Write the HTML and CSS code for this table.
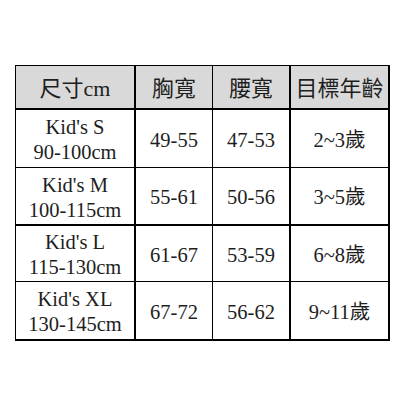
FILE: index.html
```html
<!DOCTYPE html>
<html lang="zh-Hant">
<head>
<meta charset="utf-8">
<link rel="stylesheet" href="styles.css">
</head>
<body>
<table class="size-table">
  <tr class="head">
    <th class="c1">尺寸cm</th>
    <th class="c2">胸寬</th>
    <th class="c3">腰寬</th>
    <th class="c4">目標年齡</th>
  </tr>
  <tr class="r1">
    <td class="c1">Kid's S<br>90-100cm</td>
    <td class="c2">49-55</td>
    <td class="c3">47-53</td>
    <td class="c4">2~3歲</td>
  </tr>
  <tr class="r2">
    <td class="c1">Kid's M<br>100-115cm</td>
    <td class="c2">55-61</td>
    <td class="c3">50-56</td>
    <td class="c4">3~5歲</td>
  </tr>
  <tr class="r3">
    <td class="c1">Kid's L<br>115-130cm</td>
    <td class="c2">61-67</td>
    <td class="c3">53-59</td>
    <td class="c4">6~8歲</td>
  </tr>
  <tr class="r4">
    <td class="c1">Kid's XL<br>130-145cm</td>
    <td class="c2">67-72</td>
    <td class="c3">56-62</td>
    <td class="c4">9~11歲</td>
  </tr>
</table>
</body>
</html>
```
FILE: styles.css
```css
html, body {
  margin: 0;
  padding: 0;
  background: #ffffff;
}

.size-table {
  margin: 65px 0 0 15px;
  border-collapse: separate;
  border-spacing: 0;
  border-top: 1px solid #000;
  border-left: 1px solid #000;
  table-layout: fixed;
  font-family: "Liberation Serif", "Noto Sans CJK TC", serif;
  color: #1e1e1e;
}

.size-table th,
.size-table td {
  padding: 3px 0 0 0;
  text-align: center;
  vertical-align: middle;
  border-bottom: 2px solid #000;
  box-sizing: border-box;
}

.size-table th {
  background: #d9d9d9;
  font-weight: normal;
  font-size: 22px;
  line-height: 26px;
  height: 44px;
}

.size-table td {
  font-size: 20.5px;
  line-height: 25px;
}

.c1 { width: 120px; border-right: 2px solid #000; }
.c2 { width: 77px; border-right: 1px solid #000; }
.c3 { width: 78px; border-right: 2px solid #000; }
.c4 { width: 99px; border-right: 2px solid #000; }

.r1 td { height: 58px; border-bottom-width: 1px; }
.r2 td { height: 58px; }
.r3 td { height: 56px; border-bottom-width: 1px; }
.r4 td { height: 59px; }
```
